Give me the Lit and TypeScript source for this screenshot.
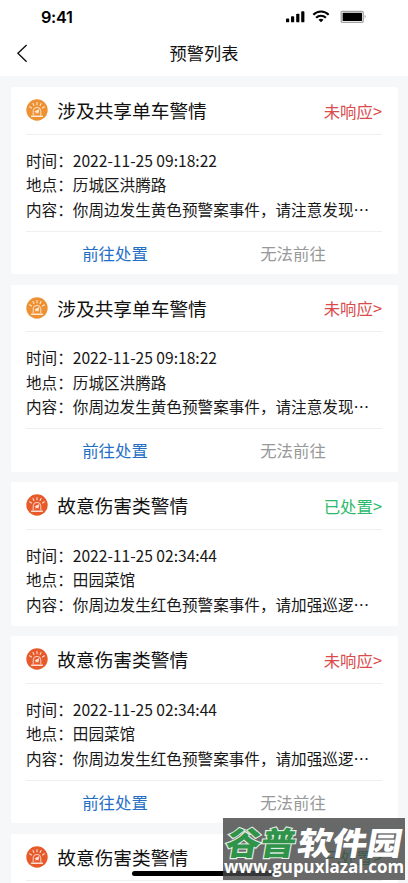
import { LitElement, html, css, svg } from "lit";
import { customElement, property } from "lit/decorators.js";

type Level = "yellow" | "red";
interface Warning {
  level: Level;
  title: string;
  done: boolean;
  time: string;
  place: string;
  content: string;
}

const bike: Warning = {
  level: "yellow",
  title: "涉及共享单车警情",
  done: false,
  time: "2022-11-25 09:18:22",
  place: "历城区洪腾路",
  content: "你周边发生黄色预警案事件，请注意发现…",
};
const harm: Warning = {
  level: "red",
  title: "故意伤害类警情",
  done: false,
  time: "2022-11-25 02:34:44",
  place: "田园菜馆",
  content: "你周边发生红色预警案事件，请加强巡逻…",
};
const warnings: Warning[] = [bike, bike, { ...harm, done: true }, harm, { ...harm, done: true }];

@customElement("status-bar")
class StatusBar extends LitElement {
  static styles = css`
    :host { display: flex; height: 33px; align-items: center; padding: 0 39.7px 0 41px; justify-content: space-between; }
    .time { font: 600 16.3px/20px Inter, sans-serif; letter-spacing: -0.35px; color: #000; }
    svg { display: block; }
  `;
  render() {
    return html`
      <span class="time">9:41</span>
      <svg width="82" height="16" viewBox="0 0 82 16">
        ${[[0, 9.5, 3.8], [5, 7.2, 6.1], [10.2, 4.7, 8.6], [15.2, 2.2, 11.1]].map(
          ([x, y, h]) => svg`<rect x=${x} y=${y} width="3.2" height=${h} rx="0.9" />`
        )}
        <g transform="translate(-0.5 0)" fill="none" stroke="#000" stroke-width="2.1">
          <path d="M27.8 5.7A10.8 10.8 0 0 1 43.2 5.7" />
          <path d="M30.6 8.8A7 7 0 0 1 40.4 8.8" />
        </g>
        <path d="M35 13.2L32.5 10.8Q35 8.9 37.5 10.8Z" />
        <rect x="55.2" y="2.3" width="22" height="11" rx="1" fill="#fff" stroke="#a2a2a2" stroke-width="1.3" />
        <rect x="56.6" y="3.7" width="19.4" height="8.2" rx="0.5" />
        <path d="M78.7 5.8Q80.7 7.6 78.7 9.6Z" fill="#999" />
      </svg>
    `;
  }
}

@customElement("alarm-icon")
class AlarmIcon extends LitElement {
  @property() level: Level = "yellow";
  static styles = css`
    :host { display: block; width: 22px; height: 22px; }
    svg { display: block; }
    .yellow { color: #ee9133; }
    .red { color: #e75b2b; }
  `;
  render() {
    return html`
      <svg class=${this.level} width="22" height="22" viewBox="0 0 22 22">
        <circle cx="11" cy="11" r="10.7" fill="currentColor" />
        <g fill="none" stroke="#fff" stroke-opacity=".8" stroke-linecap="round">
          <path stroke-width="1.1" d="M11 3.6V5.8M7 4.6L7.9 6.4M15 4.6L14.1 6.4M3.6 7.8L5.5 9M18.4 7.8L16.5 9" />
          <path stroke-width="0.9" d="M7.2 16V11.8Q7.2 8.4 11 8.4T14.8 11.8V16" />
          <path stroke-width="1.4" d="M5.6 17.3H16.4" />
        </g>
        <path d="M8.5 12.6L13.4 10.1L12.3 14.8L11 13.6L9.6 15.2L9.8 13.2Z" fill="#fff" fill-opacity=".85" />
      </svg>
    `;
  }
}

@customElement("warning-card")
class WarningCard extends LitElement {
  @property({ attribute: false }) item!: Warning;
  static styles = css`
    :host { display: block; flex: none; background: #fff; border-radius: 2px; padding: 0 16px 0 15.5px; }
    .head { display: flex; align-items: center; height: 47.5px; border-bottom: 1px solid #efefef; box-sizing: border-box; }
    .title { flex: 1; margin-left: 9.3px; font-size: 18.7px; line-height: 24px; color: #111; }
    .state { font-size: 16.4px; line-height: 24px; color: #db4b4b; margin-top: 1px; }
    .state.done { color: #2cba6c; }
    .info { padding: 13px 0 0; height: 96px; box-sizing: border-box; font-size: 15.6px; line-height: 24.7px; color: #181818; white-space: nowrap; }
    .actions { display: grid; grid-template-columns: 1fr 1fr; height: 43.5px; box-sizing: border-box; border-top: 1px solid #efefef; align-items: center; text-align: center; font-size: 16.4px; line-height: 24px; }
    .go { color: #246fc6; }
    .no { color: #999; }
  `;
  render() {
    const w = this.item;
    return html`
      <div class="head">
        <alarm-icon .level=${w.level}></alarm-icon>
        <span class="title">${w.title}</span>
        <span class="state ${w.done ? "done" : ""}">${w.done ? "已处置" : "未响应"}&gt;</span>
      </div>
      <div class="info">
        <div>时间：${w.time}</div>
        <div>地点：${w.place}</div>
        <div>内容：${w.content}</div>
      </div>
      ${w.done
        ? ""
        : html`<div class="actions"><span class="go">前往处置</span><span class="no">无法前往</span></div>`}
    `;
  }
}

@customElement("site-mark")
class SiteMark extends LitElement {
  static styles = css`
    :host { display: block; width: 182px; height: 62px; background: rgba(67, 67, 67, 0.8); overflow: hidden; }
    svg { display: block; }
    .name { font: 900 32px "Noto Sans CJK SC", sans-serif; }
    .url { font: 700 17.5px "Open Sans", sans-serif; fill: #fff; }
    .green { fill: #2f9449; stroke: #e4ede5; stroke-width: 2.2px; paint-order: stroke; }
    .white { fill: #fff; }
  `;
  render() {
    return html`
      <svg width="182" height="62" viewBox="0 0 182 62">
        <g transform="translate(6.5 0) skewX(-10)">
          <text class="name green" x="1" y="36.5" textLength="70" lengthAdjust="spacingAndGlyphs">谷普</text>
          <text class="name white" x="73" y="36.5" textLength="104" lengthAdjust="spacingAndGlyphs">软件园</text>
        </g>
        <text class="url" x="1" y="55" textLength="180" lengthAdjust="spacingAndGlyphs">www.gupuxlazal.com</text>
      </svg>
    `;
  }
}

@customElement("app-root")
class AppRoot extends LitElement {
  static styles = css`
    :host { display: block; position: relative; height: 883px; overflow: hidden; background: #f6f7f9; font-family: "Noto Sans CJK SC", sans-serif; }
    .top { height: 76px; background: #fff; }
    .nav { display: grid; grid-template-columns: 44px 1fr 44px; height: 43px; align-items: center; }
    .nav svg { display: block; margin: 0 0 2.5px 16px; }
    .nav h1 { margin: 0; font-size: 17.2px; line-height: 26px; font-weight: 400; text-align: center; color: #111; padding-bottom: 3px; }
    .list { display: flex; flex-direction: column; gap: 10.5px; padding: 11px 10px 0 10.5px; }
    .home { position: absolute; left: 132px; bottom: 7px; width: 144px; height: 5px; border-radius: 3px; background: #000; }
    site-mark { position: absolute; right: 3px; bottom: 3px; }
  `;
  render() {
    return html`
      <div class="top">
        <status-bar></status-bar>
        <div class="nav">
          <svg width="12" height="20" viewBox="0 0 12 20"><path d="M10.6 1.9L1.9 10.3L10.6 18.7" fill="none" stroke="#111" stroke-width="1.4" /></svg>
          <h1>预警列表</h1>
        </div>
      </div>
      <div class="list">${warnings.map((w) => html`<warning-card .item=${w}></warning-card>`)}</div>
      <div class="home"></div>
      <site-mark></site-mark>
    `;
  }
}
